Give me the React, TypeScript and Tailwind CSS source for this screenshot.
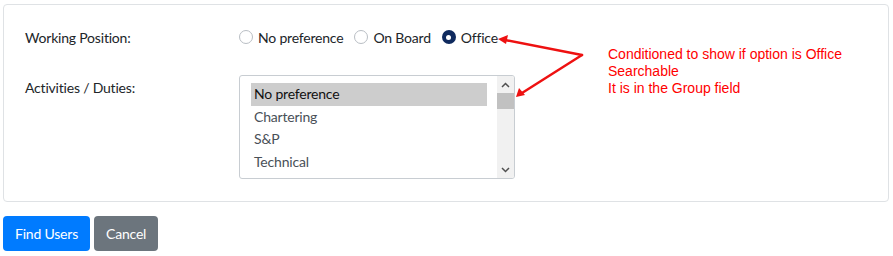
import React from "react";

const options = ["No preference", "On Board", "Office"];
const duties = ["No preference", "Chartering", "S&P", "Technical"];

const Radio: React.FC<{ label: string; checked?: boolean }> = ({ label, checked }) => (
  <label className="flex items-center gap-[5px] mr-[11px]">
    {checked ? (
      <span className="flex items-center justify-center w-[14px] h-[14px] rounded-full bg-[#0f2a5e]">
        <span className="w-[5px] h-[5px] rounded-full bg-white" />
      </span>
    ) : (
      <span className="w-[14px] h-[14px] rounded-full border border-[#b9bec4] bg-white" />
    )}
    <span>{label}</span>
  </label>
);

const App: React.FC = () => {
  return (
    <div
      className="relative w-[893px] h-[256px] bg-white text-[14px] tracking-[-0.2px] text-[#212529]"
      style={{ fontFamily: '"Segoe UI", Lato, sans-serif' }}
    >
      <div className="pt-[4px] pl-[3px] pr-[4px]">
        <div className="h-[198px] border border-[#dfe2e5] rounded-[4px] pl-[21px] pt-[22px]">
          <div className="flex items-center h-[20px]">
            <div className="w-[214px]">Working Position:</div>
            <div className="flex items-center">
              {options.map((o) => (
                <Radio key={o} label={o} checked={o === "Office"} />
              ))}
            </div>
          </div>

          <div className="flex mt-[29px]">
            <div className="w-[214px] pt-[1px]">Activities / Duties:</div>
            <div className="flex w-[276px] h-[104px] border border-[#c8cdd2] rounded-[3px] mt-[-1px] overflow-hidden">
              <div className="flex-1 pl-[11px] pr-[10px] pt-[7px]">
                {duties.map((d, i) => (
                  <div
                    key={d}
                    className={
                      "h-[22.7px] leading-[22.7px] pl-[3px] " +
                      (i === 0 ? "bg-[#cdcdcd] text-[#111]" : "text-[#495057]")
                    }
                  >
                    {d}
                  </div>
                ))}
              </div>
              <div className="flex flex-col w-[17px] bg-[#f1f1f1]">
                <div className="h-[17px] flex items-center justify-center">
                  <svg width="9" height="6" viewBox="0 0 9 6">
                    <path d="M1 5 L4.5 1.5 L8 5" fill="none" stroke="#505050" strokeWidth="1.5" />
                  </svg>
                </div>
                <div className="h-[16px] bg-[#c1c1c1]" />
                <div className="flex-1" />
                <div className="h-[17px] flex items-center justify-center">
                  <svg width="9" height="6" viewBox="0 0 9 6">
                    <path d="M1 1 L4.5 4.5 L8 1" fill="none" stroke="#505050" strokeWidth="1.5" />
                  </svg>
                </div>
              </div>
            </div>
          </div>
        </div>

        <div className="flex gap-[4px] mt-[14px]">
          <button className="h-[35px] px-[12px] rounded-[4px] bg-[#007bff] text-white text-[14px]">
            Find Users
          </button>
          <button className="h-[35px] px-[12px] rounded-[4px] bg-[#6c757d] text-white text-[14px]">
            Cancel
          </button>
        </div>
      </div>

      <div
        className="absolute left-[608px] top-[46px] text-[14px] leading-[17px] tracking-normal text-[#ff0000]"
        style={{ fontFamily: '"Liberation Sans", Arial, sans-serif' }}
      >
        <div>Conditioned to show if option is Office</div>
        <div>Searchable</div>
        <div>It is in the Group field</div>
      </div>

      <svg className="absolute left-0 top-0 pointer-events-none" width="893" height="256">
        <g stroke="#ee1111" strokeWidth="2.5" fill="none" strokeLinecap="round">
          <path d="M582 55 L505 40" />
          <path d="M582 55 L522 93" />
        </g>
        <polygon points="498,39 508,35 506,44" fill="#ee1111" />
        <polygon points="516,97 519,88 525,95" fill="#ee1111" />
      </svg>
    </div>
  );
};

export default App;
